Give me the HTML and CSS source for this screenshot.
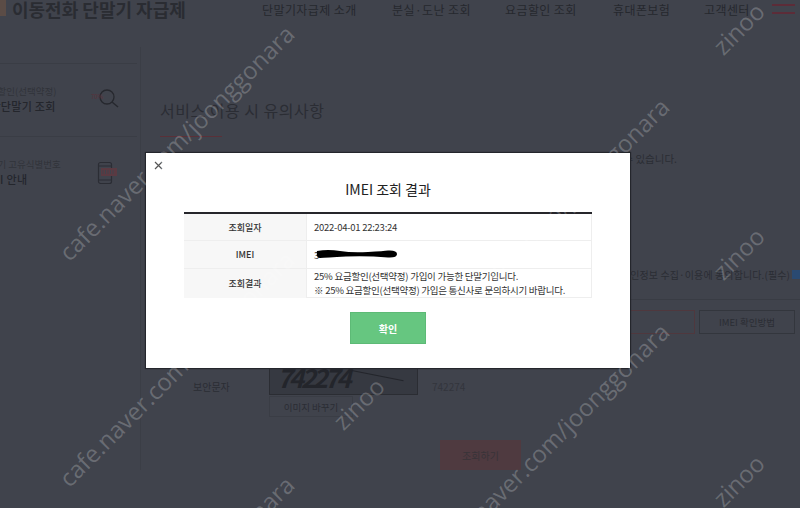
FILE: index.html
```html
<!DOCTYPE html>
<html>

<head>
    <meta charset="utf-8">
    <title>IMEI 조회 결과</title>
    <link rel="stylesheet" href="styles.css">
</head>

<body>
    <!-- 헤더 -->
    <header class="header">
        <div class="logo"><span class="logo-mark"></span>이동전화 단말기 자급제</div>
        <ul class="gnb">
            <li class="gnb-1">단말기자급제 소개</li>
            <li class="gnb-2">분실·도난 조회</li>
            <li class="gnb-3">요금할인 조회</li>
            <li class="gnb-4">휴대폰보험</li>
            <li class="gnb-5">고객센터</li>
        </ul>
        <div class="burger"><span></span><span></span><span></span></div>
    </header>

    <div class="layout">
        <!-- 사이드 -->
        <aside class="side">
            <div class="side-item">
                <div class="side-text">
                    <p>요금할인(선택약정)</p>
                    <strong>대상단말기 조회</strong>
                </div>
                <svg class="side-icon" width="30" height="24" viewBox="0 0 30 24">
                    <circle cx="17" cy="9" r="7" fill="none" stroke="#26282e" stroke-width="1.3" />
                    <path d="M22 14l6 5" stroke="#26282e" stroke-width="1.5" />
                    <text x="1" y="11" class="side-icon-text">70%</text>
                </svg>
            </div>
            <div class="side-item">
                <div class="side-text">
                    <p>단말기 고유식별번호</p>
                    <strong>IMEI 안내</strong>
                </div>
                <svg class="side-icon" width="30" height="24" viewBox="0 0 30 24">
                    <rect x="8.5" y="1.5" width="13" height="21" rx="2" fill="none" stroke="#2b2d34" stroke-width="1.2" />
                    <path d="M9 5h12M9 19h12" stroke="#2b2d34" />
                    <rect x="11" y="7" width="16" height="8" fill="#5a3a42" />
                    <path d="M13 9v4M15.5 9v4M18 9v4M20.5 9v4M23 9v4" stroke="#40434c" />
                </svg>
            </div>
        </aside>

        <!-- 본문 -->
        <main class="content">
            <h2 class="content-title">서비스 이용 시 유의사항</h2>
            <div class="title-line"></div>
            <p class="notice">단말기 자급제 서비스는 고유식별번호로 조회하실 수 있습니다.</p>
            <div class="agree">
                <span>개인정보 수집·이용에 동의합니다.(필수)</span>
                <span class="check"></span>
            </div>
            <div class="imei-row">
                <div class="imei-input"></div>
                <button class="imei-btn">IMEI 확인방법</button>
            </div>
            <div class="captcha-row">
                <label class="captcha-label">보안문자</label>
                <div class="captcha-col">
                    <div class="captcha"><span>742274</span></div>
                    <button class="captcha-btn">이미지 바꾸기</button>
                </div>
                <div class="captcha-input">742274</div>
            </div>
            <button class="submit">조회하기</button>
        </main>
    </div>

    <!-- 조회 결과 팝업 -->
    <div class="modal">
        <button class="modal-close">
            <svg width="9" height="9" viewBox="0 0 9 9">
                <path d="M1 1l7 7M8 1L1 8" stroke="#555" stroke-width="1.2" />
            </svg>
        </button>
        <h3 class="modal-title">IMEI 조회 결과</h3>
        <table class="result">
            <tr>
                <th>조회일자</th>
                <td>2022-04-01 22:23:24</td>
            </tr>
            <tr>
                <th>IMEI</th>
                <td class="imei-cell">3
                    <svg class="scribble" width="82" height="10" viewBox="0 0 82 10">
                        <path d="M1 2Q12 0 24 2T52 3T72 1.5Q81 1 81 5Q81 9 72 8.500Q50 6.500 30 7.500T4 9Q0 9 1 2Z" fill="black" />
                    </svg>
                </td>
            </tr>
            <tr>
                <th>조회결과</th>
                <td class="result-text">25% 요금할인(선택약정) 가입이 가능한 단말기입니다.<br>※ 25% 요금할인(선택약정) 가입은 통신사로 문의하시기 바랍니다.</td>
            </tr>
        </table>
        <button class="modal-ok">확인</button>
    </div>

    <!-- 워터마크 -->
    <span class="wm wm-a">cafe.naver.com/joonggonara</span>
    <span class="wm wm-b">cafe.naver.com/joonggonara</span>
    <span class="wm wm-c">cafe.naver.com/joonggonara</span>
    <span class="wm wm-d">cafe.naver.com/joonggonara</span>
    <span class="wm wm-e">cafe.naver.com/joonggonara</span>
    <span class="wm wm-f">zinoo</span>
    <span class="wm wm-g">zinoo</span>
    <span class="wm wm-h">zinoo</span>
    <span class="wm wm-i">zinoo</span>
</body>

</html>
```
FILE: styles.css
```css
html {
    height: 508px;
    overflow: hidden;
}

body {
    margin: 0;
    height: 508px;
    overflow: hidden;
    position: relative;
    background-color: #40434c;
    color: #2b2d34;
    font-family: "Noto Sans CJK KR", "Liberation Sans", sans-serif;
}

button {
    font-family: inherit;
    padding: 0;
}

/*헤더*/
.header {
    display: flex;
    align-items: center;
    height: 18px;
    padding-bottom: 29px;
}

.logo {
    display: flex;
    align-items: center;
    gap: 6px;
    width: 262px;
    flex: none;
    font-size: 18px;
    font-weight: 700;
    white-space: nowrap;
    color: #2a2c32;
}

.logo-mark {
    width: 6px;
    height: 16px;
    margin-top: -3px;
    background-color: #5b4c46;
}

.gnb {
    display: flex;
    list-style-type: none;
    margin: 0;
    padding: 0;
    font-size: 12px;
    letter-spacing: .4px;
    white-space: nowrap;
    color: #26282e;
}

.gnb-1 { width: 130px; }
.gnb-2 { width: 113px; }
.gnb-3 { width: 108px; }
.gnb-4 { width: 91px; }
.gnb-5 { width: 68px; }

.burger {
    display: flex;
    flex-direction: column;
    gap: 6.5px;
    width: 23px;
    margin-top: -8px;
}

.burger span {
    height: 1.5px;
    background-color: #5c2c38;
}

/*레이아웃*/
.layout {
    display: flex;
}

.side {
    flex: none;
    width: 157px;
    margin-left: -20px;
    padding-top: 16px;
}

.side-item {
    display: flex;
    align-items: center;
    height: 72px;
    border-top: 1px solid #3a3d45;
}

.side-text {
    width: 109px;
    flex: none;
    margin-top: -2px;
    white-space: nowrap;
}

.side-text p {
    margin: 0 0 1px;
    font-size: 9.5px;
    line-height: 14px;
    color: #31333a;
}

.side-text strong {
    display: block;
    font-size: 11px;
    line-height: 15px;
    font-weight: 500;
    letter-spacing: .3px;
    color: #24262c;
}

.side-icon {
    margin-left: 1px;
}

.side-icon-text {
    font-size: 6px;
    fill: #5c3038;
}

.content {
    flex: 1;
    border-left: 1px solid #3b3e46;
    margin-left: 3px;
    padding: 53px 5px 0 19px;
}

.content-title {
    margin: 0;
    font-size: 16px;
    line-height: 20px;
    font-weight: 400;
    letter-spacing: .5px;
    white-space: nowrap;
    color: #2b2d34;
}

.title-line {
    width: 62px;
    height: 1px;
    margin-top: 16px;
    background-color: #5a3038;
}

.notice {
    width: 517px;
    margin: 14px 0 0;
    font-size: 10.5px;
    line-height: 15px;
    text-align: right;
    white-space: nowrap;
    color: #2b2d34;
}

.agree {
    display: flex;
    justify-content: flex-end;
    align-items: center;
    gap: 2px;
    height: 34px;
    margin: 91px -5px 0 0;
    padding-bottom: 8px;
    border-bottom: 1px solid #393c44;
    font-size: 10px;
    letter-spacing: .1px;
    white-space: nowrap;
}

.check {
    flex: none;
    width: 8px;
    height: 9px;
    background-color: #2a4a72;
}

.imei-row {
    display: flex;
    justify-content: flex-end;
    gap: 4px;
    margin-top: 10px;
}

.imei-input {
    flex: 1;
    height: 22px;
    border: 1px solid #4f383e;
}

.imei-btn {
    width: 96px;
    height: 24px;
    background: none;
    border: 1px solid #33363d;
    font-size: 9.5px;
    color: #2b2d34;
}

.captcha-row {
    display: flex;
    align-items: center;
    margin-top: 27px;
}

.captcha-label {
    width: 109px;
    padding-left: 33px;
    margin-top: -6px;
    box-sizing: border-box;
    font-size: 10px;
    color: #2b2d34;
}

.captcha-col {
    width: 149px;
    flex: none;
}

.captcha {
    position: relative;
    box-sizing: border-box;
    height: 34px;
    padding: 0 0 0 7px;
    background-color: #363941;
    border: 1px solid #2b2d33;
    font-size: 26px;
    line-height: 30px;
    font-weight: 700;
    font-style: italic;
    letter-spacing: -3.5px;
    color: #23252b;
    overflow: hidden;
}

.captcha::after {
    content: "";
    position: absolute;
    left: 80px;
    top: 13px;
    width: 54px;
    height: 1px;
    background-color: #23252b;
    transform: rotate(11deg);
}

.captcha-btn {
    display: block;
    width: 84px;
    height: 21px;
    margin-top: 1px;
    background: none;
    border: 1px solid #3a3d45;
    font-size: 9.5px;
    color: #2b2d34;
}

.captcha-input {
    width: 135px;
    padding-left: 14px;
    margin-top: -6px;
    font-size: 10px;
    color: #33353c;
}

.submit {
    display: block;
    width: 81px;
    height: 30px;
    margin: 23px 0 0 280px;
    background-color: #4f3a40;
    border: 0;
    font-size: 10px;
    color: #383338;
}

/*팝업*/
.modal {
    position: absolute;
    left: 146px;
    top: 153px;
    width: 484px;
    height: 215px;
    box-sizing: border-box;
    padding: 27px 38px 0;
    background-color: white;
    box-shadow: 0 0 1px 1px #24262c;
    display: flex;
    flex-direction: column;
    align-items: center;
}

.modal-close {
    position: absolute;
    left: 8px;
    top: 8px;
    width: 9px;
    height: 9px;
    border: 0;
    background: none;
    line-height: 0;
}

.modal-title {
    margin: 0;
    font-size: 14px;
    line-height: 18px;
    font-weight: 400;
    color: #222;
}

.result {
    width: 408px;
    margin-top: 14px;
    border-collapse: collapse;
    border-top: 2px solid #26262b;
    font-size: 9.5px;
    letter-spacing: -.25px;
    color: #333;
}

.result th {
    width: 122px;
    height: 27px;
    padding: 0;
    background-color: #f7f7f7;
    border-top: 1px solid #eee;
    font-size: 9px;
    font-weight: 500;
    letter-spacing: 0;
}

.result tr:first-child th {
    height: 26px;
}

.result td {
    padding: 0 0 0 7px;
    border: 1px solid #eee;
    border-bottom: 0;
    white-space: nowrap;
    line-height: 14px;
}

.result tr:last-child td {
    border-bottom: 1px solid #eee;
}

.imei-cell {
    position: relative;
}

.scribble {
    position: absolute;
    left: 9px;
    top: 8px;
}

.modal-ok {
    width: 76px;
    height: 32px;
    margin-top: 14px;
    background-color: #66c680;
    border: 1px solid #5dba76;
    font-size: 10px;
    font-weight: 700;
    color: white;
}

/*워터마크*/
.wm {
    position: absolute;
    height: 28px;
    line-height: 28px;
    font-family: "Open Sans", "Liberation Sans", sans-serif;
    font-size: 24px;
    white-space: nowrap;
    color: rgba(255, 255, 255, .22);
    transform: rotate(-45deg);
    transform-origin: 0 100%;
}

.wm-a { left: 73px; top: 238px; }
.wm-b { left: 73px; top: 464px; }
.wm-c { left: 73px; top: 689px; }
.wm-d { left: 448px; top: 311px; }
.wm-e { left: 448px; top: 536px; }
.wm-f { left: 727px; top: 32px; }
.wm-g { left: 727px; top: 257px; }
.wm-h { left: 727px; top: 484px; }
.wm-i { left: 347px; top: 407px; }
```
